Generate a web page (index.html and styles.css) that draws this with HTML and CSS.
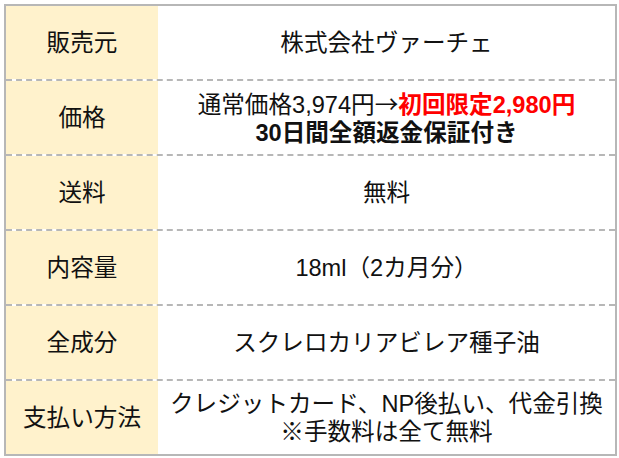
FILE: index.html
```html
<!DOCTYPE html>
<html lang="ja">
<head>
<meta charset="utf-8">
<title>商品情報</title>
<link rel="stylesheet" href="styles.css">
</head>
<body>
<div class="spec">
  <div class="row">
    <div class="label">販売元</div>
    <div class="value">株式会社ヴァーチェ</div>
  </div>
  <div class="row">
    <div class="label">価格</div>
    <div class="value">
      <div>通常価格3,974円<span class="arrow">→</span><span class="red">初回限定2,980円</span></div>
      <div class="bold">30日間全額返金保証付き</div>
    </div>
  </div>
  <div class="row">
    <div class="label">送料</div>
    <div class="value">無料</div>
  </div>
  <div class="row">
    <div class="label">内容量</div>
    <div class="value">18ml（2カ月分）</div>
  </div>
  <div class="row">
    <div class="label">全成分</div>
    <div class="value">スクレロカリアビレア種子油</div>
  </div>
  <div class="row">
    <div class="label">支払い方法</div>
    <div class="value">
      <div>クレジットカード、NP後払い、代金引換</div>
      <div>※手数料は全て無料</div>
    </div>
  </div>
</div>
</body>
</html>
```
FILE: styles.css
```css
html, body {
  margin: 0;
  padding: 0;
  background: #ffffff;
}
body {
  padding: 4px;
  font-family: "Liberation Sans", "Noto Sans CJK JP", sans-serif;
  font-size: 23.6px;
  color: #111111;
}
.spec {
  width: 609px;
  border: 2px solid #b7b7b7;
  display: flex;
  flex-direction: column;
}
.row {
  display: grid;
  grid-template-columns: 152px 1fr;
  height: 73px;
}
.row + .row {
  border-top: 2px dashed #b7b7b7;
}
.label {
  background: #fff2cc;
  display: flex;
  align-items: center;
  justify-content: center;
  line-height: 28px;
}
.value {
  display: flex;
  flex-direction: column;
  align-items: center;
  justify-content: center;
  line-height: 28px;
  text-align: center;
  white-space: nowrap;
}
.arrow {
  font-family: "Noto Sans CJK JP", sans-serif;
}
.red {
  color: #ff0000;
  font-weight: bold;
}
.bold {
  font-weight: bold;
}
```
